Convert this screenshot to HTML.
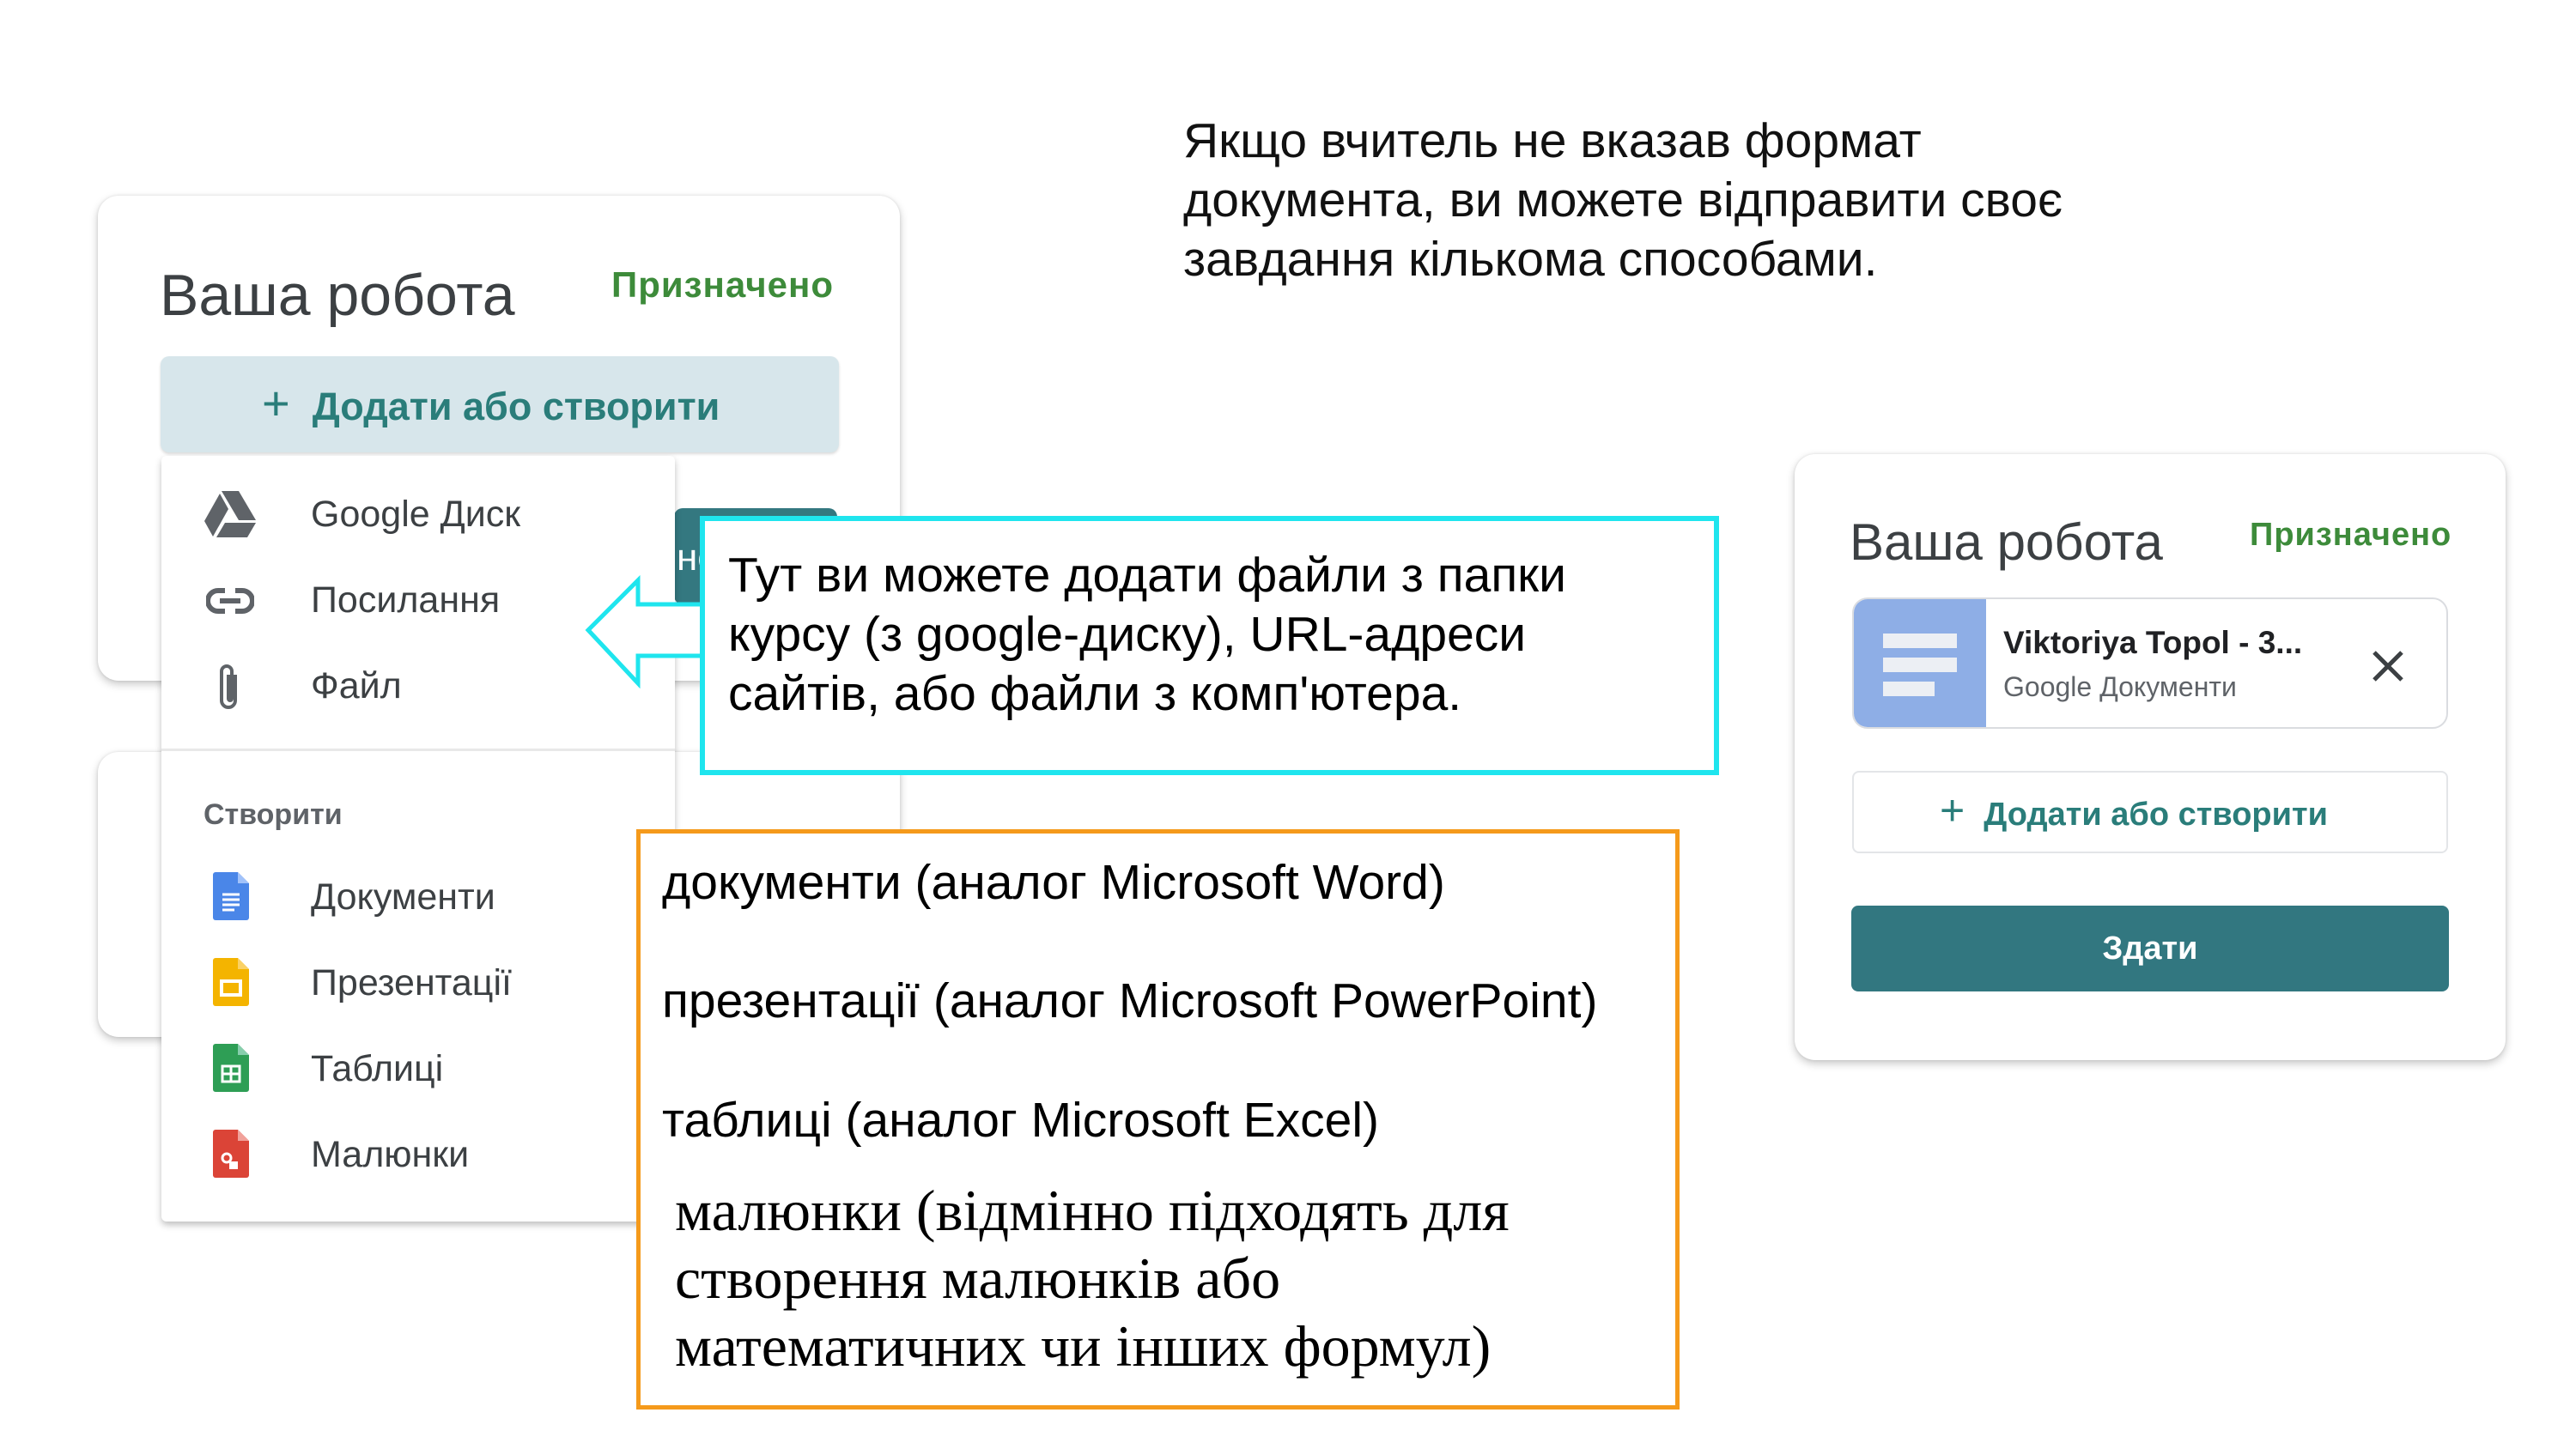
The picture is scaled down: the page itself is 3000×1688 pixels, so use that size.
<!DOCTYPE html>
<html><head><meta charset="utf-8"><style>
*{margin:0;padding:0;box-sizing:border-box}
body{width:3000px;height:1688px;background:#fff;position:relative;overflow:hidden;font-family:"Liberation Sans","DejaVu Sans",sans-serif}
.a{position:absolute}
.card{position:absolute;background:#fff;border-radius:24px;box-shadow:0 4px 10px rgba(0,0,0,.22),0 0 3px rgba(0,0,0,.1)}
.g{color:#3c4043}
.mi{position:absolute;left:362px;font-size:43px;color:#3c4043;line-height:1}
</style></head><body>
<div class="a" style="left:1378px;top:130px;font-size:57px;line-height:69px;color:#111">Якщо вчитель не вказав формат<br>документа, ви можете відправити своє<br>завдання кількома способами.</div>

<!-- left card 1 -->
<div class="card" style="left:114px;top:228px;width:934px;height:565px"></div>
<div class="a g" style="left:186px;top:305px;font-size:68px">Ваша робота</div>
<div class="a" style="left:712px;top:308px;font-size:42px;color:#3d8b3a;font-weight:bold;letter-spacing:1px">Призначено</div>
<div class="a" style="left:187px;top:415px;width:790px;height:112px;background:#d7e6eb;border-radius:10px;box-shadow:0 2px 3px rgba(0,0,0,.15)"></div>
<div class="a" style="left:305px;top:440px;font-size:45px;color:#2a7d7a;font-weight:bold;line-height:60px"><span style="font-weight:normal;font-size:56px;margin-right:26px">+</span>Додати або створити</div>
<div class="a" style="left:785px;top:592px;width:190px;height:112px;background:#347880;border-radius:10px"></div>
<div class="a" style="left:788px;top:625px;font-size:44px;color:#fff">не</div>

<!-- card 2 -->
<div class="card" style="left:114px;top:876px;width:934px;height:332px"></div>

<!-- menu -->
<div class="a" style="left:188px;top:531px;width:598px;height:892px;background:#fff;border-radius:6px;box-shadow:0 4px 8px rgba(0,0,0,.25)"></div>
<div class="a" style="left:188px;top:872px;width:598px;height:3px;background:#e8e8e8"></div>
<svg class="a" style="left:238px;top:572px" width="60" height="54" viewBox="0 0 60 54"><path d="M20 0h20l20 34H40z" fill="#5f6368"/><path d="M18 3L0 35l10 18 18-32z" fill="#5f6368"/><path d="M14 54l10-17h36l-10 17z" fill="#5f6368"/></svg>
<div class="mi" style="top:578px">Google Диск</div>
<svg class="a" style="left:240px;top:683px" width="56" height="34" viewBox="0 0 56 34"><path d="M22 5H14a12 12 0 0 0 0 24h8M34 5h8a12 12 0 0 1 0 24h-8M16 17h24" stroke="#5f6368" stroke-width="6" fill="none"/></svg>
<div class="mi" style="top:678px">Посилання</div>
<svg class="a" style="left:252px;top:772px" width="30" height="58" viewBox="0 0 30 58"><path d="M22 14v30a8 8 0 0 1-16 0V10a6 6 0 0 1 12 0v32a2 2 0 0 1-4 0V14" stroke="#5f6368" stroke-width="4" fill="none"/></svg>
<div class="mi" style="top:778px">Файл</div>
<div class="a" style="left:237px;top:930px;font-size:34px;color:#5f6368;font-weight:bold">Створити</div>
<svg class="a" style="left:248px;top:1016px" width="42" height="56" viewBox="0 0 42 56"><path d="M3 0h26l13 13v40a3 3 0 0 1-3 3H3a3 3 0 0 1-3-3V3a3 3 0 0 1 3-3z" fill="#4a86e8"/><path d="M29 0v13h13z" fill="#a1c2fa"/><path d="M11 26h20M11 32h20M11 38h20M11 44h14" stroke="#fff" stroke-width="3"/></svg>
<div class="mi" style="top:1024px">Документи</div>
<svg class="a" style="left:248px;top:1116px" width="42" height="56" viewBox="0 0 42 56"><path d="M3 0h26l13 13v40a3 3 0 0 1-3 3H3a3 3 0 0 1-3-3V3a3 3 0 0 1 3-3z" fill="#f4b400"/><path d="M29 0v13h13z" fill="#fad165"/><rect x="10" y="27" width="22" height="16" fill="none" stroke="#fff" stroke-width="4"/></svg>
<div class="mi" style="top:1124px">Презентації</div>
<svg class="a" style="left:248px;top:1216px" width="42" height="56" viewBox="0 0 42 56"><path d="M3 0h26l13 13v40a3 3 0 0 1-3 3H3a3 3 0 0 1-3-3V3a3 3 0 0 1 3-3z" fill="#2e9e55"/><path d="M29 0v13h13z" fill="#87ceac"/><path d="M11 26h20v18H11zM11 35h20M21 26v18" stroke="#fff" stroke-width="3" fill="none"/></svg>
<div class="mi" style="top:1224px">Таблиці</div>
<svg class="a" style="left:248px;top:1316px" width="42" height="56" viewBox="0 0 42 56"><path d="M3 0h26l13 13v40a3 3 0 0 1-3 3H3a3 3 0 0 1-3-3V3a3 3 0 0 1 3-3z" fill="#db4437"/><path d="M29 0v13h13z" fill="#f1a19a"/><circle cx="16" cy="33" r="5" fill="none" stroke="#fff" stroke-width="3"/><rect x="19" y="37" width="10" height="9" fill="#fff"/></svg>
<div class="mi" style="top:1324px">Малюнки</div>

<!-- arrow -->
<svg class="a" style="left:680px;top:670px" width="145" height="132" viewBox="680 670 145 132"><path d="M685 734L743 676V704H822V764H743V796Z" fill="#fff" stroke="#1fe5ee" stroke-width="5"/></svg>
<!-- cyan box -->
<div class="a" style="left:815px;top:601px;width:1187px;height:302px;border:6px solid #1fe5ee;background:#fff"></div>
<div class="a" style="left:848px;top:636px;font-size:57px;line-height:69px;color:#000">Тут ви можете додати файли з папки<br>курсу (з google-диску), URL-адреси<br>сайтів, або файли з комп'ютера.</div>

<!-- orange box -->
<div class="a" style="left:741px;top:966px;width:1215px;height:676px;border:5px solid #f59a1b;background:#fff"></div>
<div class="a" style="left:771px;top:1000px;font-size:57px;color:#000;line-height:1">документи (аналог Microsoft Word)</div>
<div class="a" style="left:771px;top:1138px;font-size:57px;color:#000;line-height:1">презентації (аналог Microsoft PowerPoint)</div>
<div class="a" style="left:771px;top:1277px;font-size:57px;color:#000;line-height:1">таблиці (аналог Microsoft Excel)</div>
<div class="a" style="left:786px;top:1371px;font-family:'Liberation Serif',serif;font-size:68px;line-height:79px;color:#000">малюнки (відмінно підходять для<br>створення малюнків або<br>математичних чи інших формул)</div>

<!-- right card -->
<div class="card" style="left:2090px;top:529px;width:828px;height:706px"></div>
<div class="a g" style="left:2154px;top:597px;font-size:60px">Ваша робота</div>
<div class="a" style="left:2620px;top:602px;font-size:38px;color:#3d8b3a;font-weight:bold;letter-spacing:1px">Призначено</div>
<div class="a" style="left:2157px;top:696px;width:694px;height:153px;border:2px solid #dadce0;border-radius:18px;overflow:hidden;background:#fff">
 <div class="a" style="left:0;top:0;width:154px;height:151px;background:#8eaee6"></div>
 <div class="a" style="left:34px;top:40px;width:86px;height:17px;background:#eceff4"></div>
 <div class="a" style="left:34px;top:68px;width:86px;height:17px;background:#eceff4"></div>
 <div class="a" style="left:34px;top:96px;width:60px;height:17px;background:#eceff4"></div>
</div>
<div class="a" style="left:2333px;top:728px;font-size:37px;color:#202124;font-weight:bold">Viktoriya Topol - 3...</div>
<div class="a" style="left:2333px;top:782px;font-size:32px;color:#5f6368">Google Документи</div>
<svg class="a" style="left:2762px;top:757px" width="38" height="38" viewBox="0 0 38 38"><path d="M3 3L35 35M35 3L3 35" stroke="#3c4043" stroke-width="5"/></svg>
<div class="a" style="left:2157px;top:898px;width:694px;height:96px;border:2px solid #e3e5e8;border-radius:8px"></div>
<div class="a" style="left:2259px;top:916px;font-size:38px;color:#2a7d7a;font-weight:bold;line-height:56px"><span style="font-weight:normal;font-size:50px;margin-right:22px">+</span>Додати або створити</div>
<div class="a" style="left:2156px;top:1055px;width:696px;height:100px;background:#327780;border-radius:8px;color:#fff;font-size:38px;text-align:center;line-height:100px;font-weight:bold">Здати</div>
</body></html>
